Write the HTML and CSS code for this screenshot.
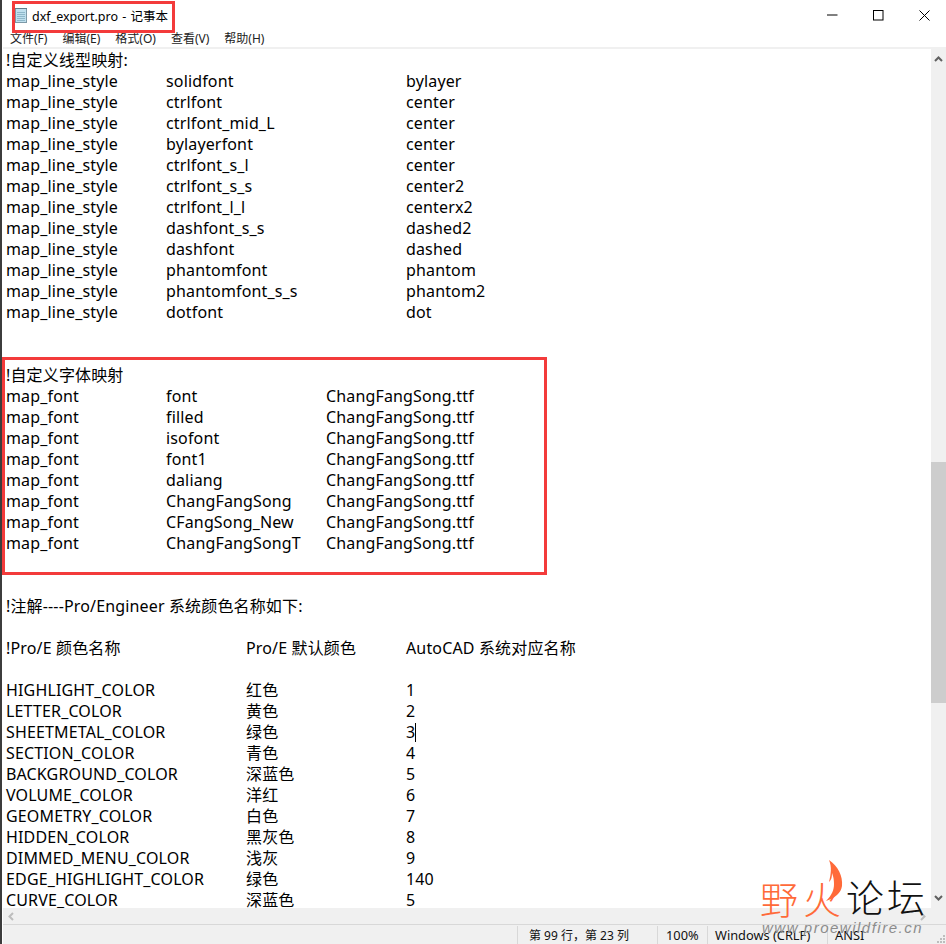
FILE: index.html
```html
<!DOCTYPE html>
<html lang="zh-CN">
<head>
<meta charset="utf-8">
<title>dxf_export.pro - 记事本</title>
<link rel="stylesheet" href="styles.css">
</head>
<body>
<div class="window">
  <header class="titlebar">
    <div class="title">
      <svg class="app-icon" width="14" height="17" viewBox="0 0 14 17"><rect x="1.500" y="1.500" width="11" height="14" fill="#bfe0ee" stroke="#7d9aa8"/><path d="M3 5.500h8M3 7.500h8M3 9.500h8M3 11.500h8M3 13.500h8" stroke="#8fb8ca"/><path d="M1.500 1.500h11" stroke="#44606e" stroke-dasharray="1 1"/></svg>
      <span>dxf_export.pro - 记事本</span>
    </div>
    <div class="controls">
      <svg width="11" height="2" viewBox="0 0 11 2"><path d="M0 1h10.500" stroke="#000"/></svg>
      <svg width="11" height="11" viewBox="0 0 11 11"><rect x=".5" y=".5" width="9.500" height="9.500" fill="none" stroke="#000"/></svg>
      <svg width="11" height="11" viewBox="0 0 11 11"><path d="M.5.5l10 10M10.500.5l-10 10" stroke="#000" fill="none"/></svg>
    </div>
  </header>
  <nav class="menubar"><span>文件(F)</span><span>编辑(E)</span><span>格式(O)</span><span>查看(V)</span><span>帮助(H)</span></nav>
  <div class="workspace">
    <main class="editor">
      <pre class="text">!自定义线型映射:
map_line_style	solidfont			bylayer
map_line_style	ctrlfont			center
map_line_style	ctrlfont_mid_L		center
map_line_style	bylayerfont		center
map_line_style	ctrlfont_s_l		center
map_line_style	ctrlfont_s_s		center2
map_line_style	ctrlfont_l_l		centerx2
map_line_style	dashfont_s_s		dashed2
map_line_style	dashfont			dashed
map_line_style	phantomfont		phantom
map_line_style	phantomfont_s_s		phantom2
map_line_style	dotfont			dot


!自定义字体映射
map_font		font		ChangFangSong.ttf
map_font		filled		ChangFangSong.ttf
map_font		isofont		ChangFangSong.ttf
map_font		font1		ChangFangSong.ttf
map_font		daliang		ChangFangSong.ttf
map_font		ChangFangSong	ChangFangSong.ttf
map_font		CFangSong_New	ChangFangSong.ttf
map_font		ChangFangSongT	ChangFangSong.ttf


!注解----Pro/Engineer 系统颜色名称如下:

!Pro/E 颜色名称		Pro/E 默认颜色	AutoCAD 系统对应名称

HIGHLIGHT_COLOR		红色		1
LETTER_COLOR		黄色		2
SHEETMETAL_COLOR	绿色		3<i class="caret"></i>
SECTION_COLOR		青色		4
BACKGROUND_COLOR	深蓝色		5
VOLUME_COLOR		洋红		6
GEOMETRY_COLOR		白色		7
HIDDEN_COLOR		黑灰色		8
DIMMED_MENU_COLOR	浅灰		9
EDGE_HIGHLIGHT_COLOR	绿色		140
CURVE_COLOR		深蓝色		5</pre>
    </main>
    <aside class="vscroll">
      <svg class="arrow" width="9" height="6" viewBox="0 0 9 6"><path d="M1 5l3.500-3.500L8 5" fill="none" stroke="#606060" stroke-width="2"/></svg>
      <div class="vtrack"><div class="vthumb"></div></div>
      <svg class="arrow" width="9" height="6" viewBox="0 0 9 6"><path d="M1 1l3.500 3.500L8 1" fill="none" stroke="#606060" stroke-width="2"/></svg>
    </aside>
  </div>
  <div class="hscroll">
    <svg width="6" height="9" viewBox="0 0 6 9"><path d="M5 1L1.500 4.500 5 8" fill="none" stroke="#bdbdbd" stroke-width="2"/></svg>
    <svg width="6" height="9" viewBox="0 0 6 9"><path d="M1 1l3.500 3.500L1 8" fill="none" stroke="#bdbdbd" stroke-width="2"/></svg>
  </div>
  <footer class="statusbar">
    <span class="cell cell-pos">第 99 行，第 23 列</span>
    <span class="cell cell-zoom">100%</span>
    <span class="cell cell-eol">Windows (CRLF)</span>
    <span class="cell cell-enc">ANSI</span>
    <svg class="grip" width="8" height="8" viewBox="0 0 8 8"><path d="M6 0h2v2H6zM3 3h2v2H3zM6 3h2v2H6zM0 6h2v2H0zM3 6h2v2H3zM6 6h2v2H6z" fill="#bdbdbd"/></svg>
  </footer>
  <div class="edge"></div>
  <div class="redbox redbox-title"></div>
  <div class="redbox redbox-fonts"></div>
  <div class="watermark">
    <span class="wm-ye">野</span><span class="wm-huo">火</span>
    <svg class="wm-flame" width="20" height="44" viewBox="0 0 20 44"><path d="M5 0C14 6 19 16 18 26C17 33 11 38 2 41C8 35 10 30 10 24C10 18 9 16 8 13C8 18 7 20 5 22C7 14 8 7 5 0Z" fill="#ff6a39"/></svg>
    <span class="wm-lun">论坛</span>
    <span class="wm-url">www.proewildfire.cn</span>
  </div>
</div>
</body>
</html>
```

FILE: styles.css
```css
html, body { margin: 0; padding: 0; }
body { width: 946px; height: 944px; overflow: hidden; background: #fff; }
.window { position: relative; width: 946px; height: 944px; display: flex; flex-direction: column; font-family: "Noto Sans", "Noto Sans CJK SC", sans-serif; color: #000; overflow: hidden; }
.titlebar { height: 30px; display: flex; justify-content: space-between; align-items: center; flex: none; }
.title { display: flex; align-items: center; gap: 4px; padding-left: 14px; font-size: 12.500px; word-spacing: 1px; }
.controls { display: flex; align-items: center; gap: 35px; padding-right: 16px; }
.menubar { height: 17px; flex: none; display: flex; gap: 15px; padding-left: 10px; font-size: 12px; line-height: 17px; color: #222; border-bottom: 2px solid #f0f0f0; }
.workspace { flex: 1; min-height: 0; display: flex; }
.editor { flex: 1; min-width: 0; overflow: hidden; }
.text { margin: 0; padding: 1px 0 0 6px; font-family: "Noto Sans", "Noto Sans CJK SC", sans-serif; font-size: 16px; letter-spacing: 0.150px; line-height: 21px; tab-size: 80px; white-space: pre; color: #000; }
.caret { display: inline-block; width: 1px; height: 19px; background: #000; vertical-align: -4px; }
.vscroll { width: 15px; flex: none; background: #f0f0f0; display: flex; flex-direction: column; align-items: center; padding: 7px 0; box-sizing: border-box; }
.arrow { flex: none; }
.vtrack { flex: 1; width: 15px; padding-top: 400px; box-sizing: border-box; }
.vthumb { height: 241px; background: #cdcdcd; }
.hscroll { height: 16px; flex: none; background: #f0f0f0; border-bottom: 1px solid #d8d8d8; display: flex; justify-content: space-between; align-items: center; padding: 0 20px 0 8px; }
.statusbar { position: relative; height: 19px; flex: none; background: #f0f0f0; display: flex; font-size: 12.800px; line-height: 19px; color: #111; padding-left: 517px; }
.cell { border-left: 1px solid #d8d8d8; padding-left: 11px; box-sizing: border-box; white-space: nowrap; margin-top: 1px; }
.cell-pos { width: 140px; font-size: 12px; }
.cell-zoom { width: 50px; padding-left: 8px; }
.cell-eol { width: 120px; padding-left: 7px; }
.cell-enc { width: 60px; padding-left: 7px; }
.grip { position: absolute; right: 1px; bottom: 1px; }
.edge { position: absolute; left: 0; top: 0; width: 2px; height: 944px; background: #3c3c3c; border-right: 1px solid #fff; }
.redbox { position: absolute; border: 3px solid #f33b3b; box-sizing: border-box; pointer-events: none; }
.redbox-title { left: 12px; top: 1px; width: 163px; height: 32px; }
.redbox-fonts { left: 2px; top: 357px; width: 545px; height: 218px; }
.watermark { position: absolute; left: 760px; top: 860px; width: 170px; height: 84px; }
.wm-ye, .wm-huo, .wm-lun { position: absolute; font-family: "Noto Sans CJK SC", sans-serif; font-weight: 300; font-size: 38px; line-height: 50px; white-space: nowrap; }
.wm-ye { left: 0; top: 13px; color: #ff6a39; }
.wm-huo { left: 43px; top: 13px; color: #ff6a39; }
.wm-flame { position: absolute; left: 64px; top: 0; }
.wm-lun { left: 86px; top: 11px; color: #111; letter-spacing: 3px; }
.wm-url { position: absolute; left: 2px; top: 59px; font: italic 15px "Liberation Sans", sans-serif; letter-spacing: 1.500px; color: #8c8c8c; white-space: nowrap; }
```
